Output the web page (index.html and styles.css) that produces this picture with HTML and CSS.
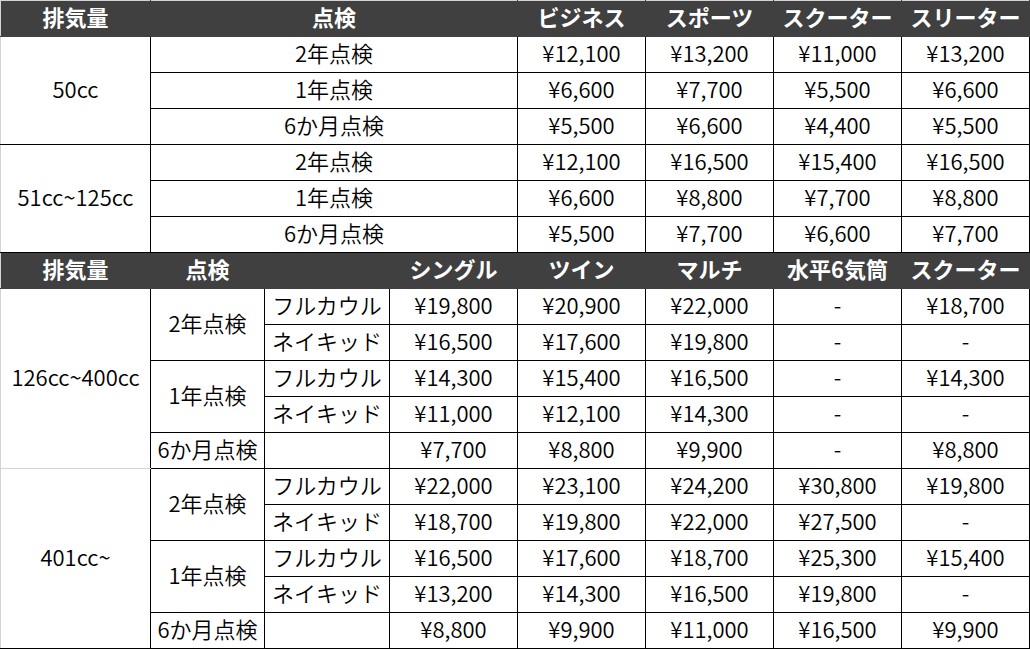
FILE: index.html
```html
<!DOCTYPE html>
<html lang="ja">
<head>
<meta charset="utf-8">
<title>点検料金表</title>
<link rel="stylesheet" href="styles.css">
</head>
<body>
<table class="price">
  <colgroup>
    <col class="w-disp"><col class="w-kind"><col class="w-type"><col class="w-val"><col class="w-val"><col class="w-val"><col class="w-val"><col class="w-val">
  </colgroup>
  <tr class="head first">
    <th class="edge">排気量</th><th colspan="3">点検</th><th>ビジネス</th><th>スポーツ</th><th>スクーター</th><th class="last">スリーター</th>
  </tr>
  <tr><td rowspan="3" class="edge disp">50cc</td><td colspan="3">2年点検</td><td>¥12,100</td><td>¥13,200</td><td>¥11,000</td><td>¥13,200</td></tr>
  <tr><td colspan="3">1年点検</td><td>¥6,600</td><td>¥7,700</td><td>¥5,500</td><td>¥6,600</td></tr>
  <tr><td colspan="3">6か月点検</td><td>¥5,500</td><td>¥6,600</td><td>¥4,400</td><td>¥5,500</td></tr>
  <tr><td rowspan="3" class="edge disp">51cc~125cc</td><td colspan="3">2年点検</td><td>¥12,100</td><td>¥16,500</td><td>¥15,400</td><td>¥16,500</td></tr>
  <tr><td colspan="3">1年点検</td><td>¥6,600</td><td>¥8,800</td><td>¥7,700</td><td>¥8,800</td></tr>
  <tr><td colspan="3">6か月点検</td><td>¥5,500</td><td>¥7,700</td><td>¥6,600</td><td>¥7,700</td></tr>
  <tr class="head">
    <th class="edge">排気量</th><th>点検</th><th></th><th>シングル</th><th>ツイン</th><th>マルチ</th><th>水平6気筒</th><th class="last">スクーター</th>
  </tr>
  <tr><td rowspan="5" class="edge disp open-bottom">126cc~400cc</td><td rowspan="2">2年点検</td><td class="type">フルカウル</td><td>¥19,800</td><td>¥20,900</td><td>¥22,000</td><td>-</td><td>¥18,700</td></tr>
  <tr><td class="type">ネイキッド</td><td>¥16,500</td><td>¥17,600</td><td>¥19,800</td><td>-</td><td>-</td></tr>
  <tr><td rowspan="2">1年点検</td><td class="type">フルカウル</td><td>¥14,300</td><td>¥15,400</td><td>¥16,500</td><td>-</td><td>¥14,300</td></tr>
  <tr><td class="type">ネイキッド</td><td>¥11,000</td><td>¥12,100</td><td>¥14,300</td><td>-</td><td>-</td></tr>
  <tr><td>6か月点検</td><td></td><td>¥7,700</td><td>¥8,800</td><td>¥9,900</td><td>-</td><td>¥8,800</td></tr>
  <tr><td rowspan="5" class="edge disp open-top">401cc~</td><td rowspan="2">2年点検</td><td class="type">フルカウル</td><td>¥22,000</td><td>¥23,100</td><td>¥24,200</td><td>¥30,800</td><td>¥19,800</td></tr>
  <tr><td class="type">ネイキッド</td><td>¥18,700</td><td>¥19,800</td><td>¥22,000</td><td>¥27,500</td><td>-</td></tr>
  <tr><td rowspan="2">1年点検</td><td class="type">フルカウル</td><td>¥16,500</td><td>¥17,600</td><td>¥18,700</td><td>¥25,300</td><td>¥15,400</td></tr>
  <tr><td class="type">ネイキッド</td><td>¥13,200</td><td>¥14,300</td><td>¥16,500</td><td>¥19,800</td><td>-</td></tr>
  <tr><td>6か月点検</td><td></td><td>¥8,800</td><td>¥9,900</td><td>¥11,000</td><td>¥16,500</td><td>¥9,900</td></tr>
</table>
</body>
</html>
```
FILE: styles.css
```css
html, body {
  margin: 0;
  padding: 0;
  background: #ffffff;
}

.price {
  border-collapse: collapse;
  table-layout: fixed;
  width: 1030px;
  font-family: "Noto Sans CJK JP", "Noto Sans", sans-serif;
  font-size: 22px;
  font-weight: 350;
  color: #000000;
}

.w-disp { width: 150px; }
.w-kind { width: 114px; }
.w-type { width: 125px; }
.w-val { width: 128px; }

.price td,
.price th {
  height: 35px;
  padding: 0 0 5px 0;
  line-height: 30px;
  text-align: center;
  vertical-align: middle;
  white-space: nowrap;
  border: 1px solid #000000;
  box-sizing: border-box;
}

.price th {
  background: #404040;
  color: #ffffff;
  font-weight: 700;
  border-color: #404040;
}

.price .head.first th {
  border-top-color: #d4d4d4;
}

.price .edge {
  border-left-color: #d4d4d4;
}

.price .open-bottom {
  border-bottom-color: #d4d4d4;
}

.price .open-top {
  border-top-color: #d4d4d4;
}
```
